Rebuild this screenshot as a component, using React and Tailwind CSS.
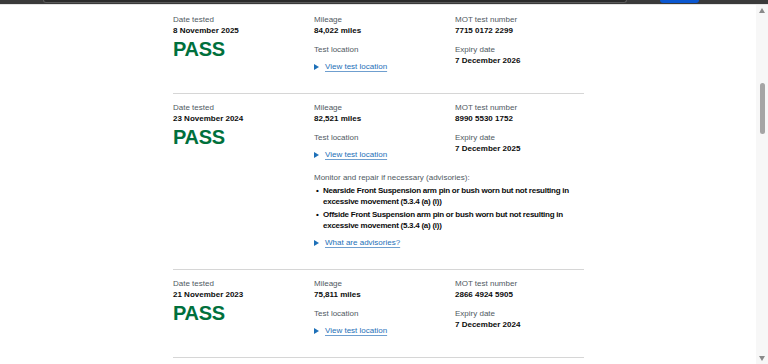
import React from "react";

const FONT = { fontFamily: '"Liberation Sans", Arial, sans-serif' };

function Label({ children, className = "" }) {
  return (
    <p className={"text-[8px] leading-[10px] text-[#505a5f] " + className}>{children}</p>
  );
}

function Value({ children }) {
  return <p className="text-[8px] leading-[11px] font-bold text-[#0b0c0c]">{children}</p>;
}

function Triangle() {
  return (
    <svg width="5" height="6" viewBox="0 0 5 6" className="mr-[6px] shrink-0">
      <path d="M0 0 L5 3 L0 6 Z" fill="#1d70b8" />
    </svg>
  );
}

function DetailLink({ children, className = "" }) {
  return (
    <div className={"flex items-center h-[10px] " + className}>
      <Triangle />
      <span className="text-[8px] leading-[10px] text-[#1d70b8] underline decoration-[#6f9fcf] decoration-1 underline-offset-[1.5px]">
        {children}
      </span>
    </div>
  );
}

function Row({ first, date, mileage, motNo, expiry, advisories }) {
  return (
    <div>
      <div className={(first ? "pt-[10px]" : "pt-[9px]") + " pb-[21px] grid grid-cols-[141px_1fr]"}>
        <div>
          <Label>Date tested</Label>
          <Value>{date}</Value>
          <p className="mt-[3px] text-[20px] leading-[20px] font-bold tracking-[-0.3px] text-[#00703c]">
            PASS
          </p>
        </div>
        <div>
          <div className="grid grid-cols-[141px_1fr]">
            <div>
              <Label>Mileage</Label>
              <Value>{mileage}</Value>
              <Label className="mt-[9px]">Test location</Label>
              <DetailLink className="mt-[7px]">View test location</DetailLink>
            </div>
            <div>
              <Label>MOT test number</Label>
              <Value>{motNo}</Value>
              <Label className="mt-[9px]">Expiry date</Label>
              <Value>{expiry}</Value>
            </div>
          </div>
          {advisories && (
            <div>
              <Label className="mt-[13px]">Monitor and repair if necessary (advisories):</Label>
              <ul className="mt-[2px]">
                {advisories.map((a, i) => (
                  <li key={i} className={"flex " + (i > 0 ? "mt-[2px]" : "")}>
                    <span className="w-[9px] shrink-0 pl-[2px] text-[8px] leading-[11px] font-bold text-[#0b0c0c]">•</span>
                    <span className="text-[8px] leading-[11px] font-bold tracking-[-0.25px] text-[#0b0c0c] whitespace-nowrap">
                      {a[0]}
                      <br />
                      {a[1]}
                    </span>
                  </li>
                ))}
              </ul>
              <DetailLink className="mt-[7px]">What are advisories?</DetailLink>
            </div>
          )}
        </div>
      </div>
      <div className="h-[1px] bg-[#d6d6d6]" />
    </div>
  );
}

export default function App() {
  return (
    <div className="w-[768px] h-[364px] overflow-hidden bg-white flex flex-col" style={FONT}>
      {/* browser chrome strip */}
      <div className="h-[4px] bg-[#3a3a3a] relative shrink-0">
        <div className="absolute left-[43px] top-0 w-[584px] h-[3px] bg-[#2b2b2b] border-b border-x border-[#5a5a5a] rounded-b-[3px]" />
        <div className="absolute left-[660px] top-0 w-[39px] h-[3px] bg-[#0b57d0] rounded-b-[3px]" />
      </div>
      <div className="h-[1px] bg-[#e4e4e4] shrink-0" />
      <div className="flex flex-1 min-h-0">
        <div className="flex-1 pl-[173px]">
          <div className="w-[411px]">
            <Row
              first
              date="8 November 2025"
              mileage="84,022 miles"
              motNo="7715 0172 2299"
              expiry="7 December 2026"
            />
            <Row
              date="23 November 2024"
              mileage="82,521 miles"
              motNo="8990 5530 1752"
              expiry="7 December 2025"
              advisories={[
                [
                  "Nearside Front Suspension arm pin or bush worn but not resulting in",
                  "excessive movement (5.3.4 (a) (i))",
                ],
                [
                  "Offside Front Suspension arm pin or bush worn but not resulting in",
                  "excessive movement (5.3.4 (a) (i))",
                ],
              ]}
            />
            <Row
              date="21 November 2023"
              mileage="75,811 miles"
              motNo="2866 4924 5905"
              expiry="7 December 2024"
            />
          </div>
        </div>
        {/* scrollbar */}
        <div className="w-[12px] shrink-0 bg-[#f7f7f7] flex flex-col items-center">
          <svg width="6" height="5" viewBox="0 0 6 5" className="mt-[3px]">
            <path d="M3 0 L6 5 L0 5 Z" fill="#8a8a8a" />
          </svg>
          <div className="mt-[70px] w-[5px] h-[51px] rounded-full bg-[#a5a5a5]" />
          <div className="flex-1" />
          <svg width="6" height="5" viewBox="0 0 6 5" className="mb-[3px]">
            <path d="M0 0 L6 0 L3 5 Z" fill="#8a8a8a" />
          </svg>
        </div>
      </div>
    </div>
  );
}
